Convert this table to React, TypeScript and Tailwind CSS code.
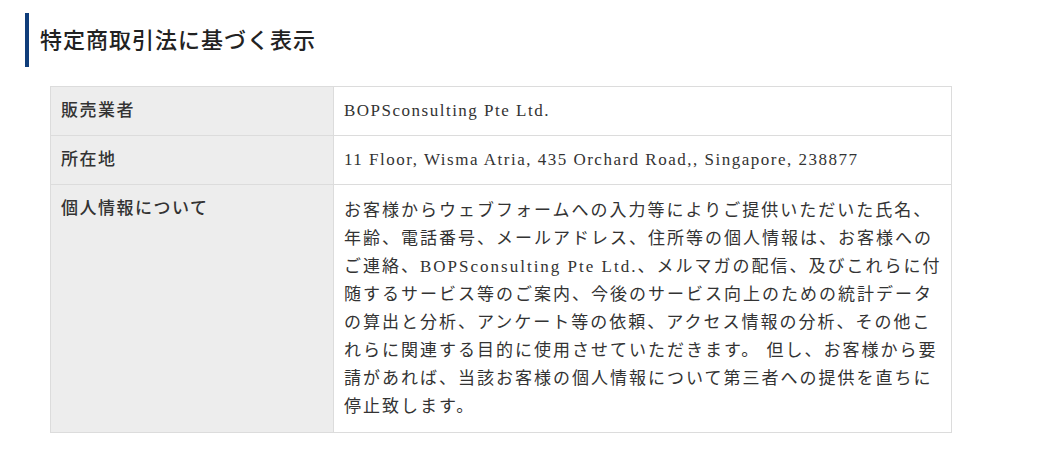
const FONT = "font-['Liberation_Serif','Noto_Sans_CJK_JP',serif]";

const ROWS: { label: string; lines: string[]; latin?: boolean }[] = [
  { label: "販売業者", lines: ["BOPSconsulting Pte Ltd."], latin: true },
  { label: "所在地", lines: ["11 Floor, Wisma Atria, 435 Orchard Road,, Singapore, 238877"], latin: true },
  {
    label: "個人情報について",
    lines: [
      "お客様からウェブフォームへの入力等によりご提供いただいた氏名、",
      "年齢、電話番号、メールアドレス、住所等の個人情報は、お客様への",
      "ご連絡、BOPSconsulting Pte Ltd.、メルマガの配信、及びこれらに付",
      "随するサービス等のご案内、今後のサービス向上のための統計データ",
      "の算出と分析、アンケート等の依頼、アクセス情報の分析、その他こ",
      "れらに関連する目的に使用させていただきます。 但し、お客様から要",
      "請があれば、当該お客様の個人情報について第三者への提供を直ちに",
      "停止致します。",
    ],
  },
];

export default function App() {
  return (
    <div className={`w-[1040px] h-[459px] bg-white text-[#333] ${FONT}`}>
      {/* 見出し */}
      <div className="pt-[13px] pl-[25px]">
        <div className="flex items-center h-[54px] border-l-4 border-[#0f3d7a] pl-[11px]">
          <h2 className="text-[22px] font-medium tracking-[1px] text-[#222]">特定商取引法に基づく表示</h2>
        </div>
      </div>

      <div className="mt-[19px] ml-[50px] w-[902px] border border-[#dcdcdc]">
        {ROWS.map((r, i) => {
          const last = i === ROWS.length - 1;
          return (
            <div key={r.label} className={`flex ${i > 0 ? "border-t border-[#dcdcdc]" : ""}`}>
              <div className="w-[283px] shrink-0 bg-[#ededed] border-r border-[#dcdcdc] px-[10px] pt-[10px] text-[17px] font-medium tracking-[1.5px] leading-[28px]">
                {r.label}
              </div>
              <div
                className={`flex-1 px-[10px] text-[17px] leading-[28px] whitespace-nowrap ${
                  last ? "pt-[12px] pb-[11px]" : "pt-[10px] pb-[10px]"
                } ${r.latin ? "tracking-[1.5px]" : "tracking-[2px]"}`}
              >
                {r.lines.map((l, j) => (
                  <div key={j}>{l}</div>
                ))}
              </div>
            </div>
          );
        })}
      </div>
    </div>
  );
}
